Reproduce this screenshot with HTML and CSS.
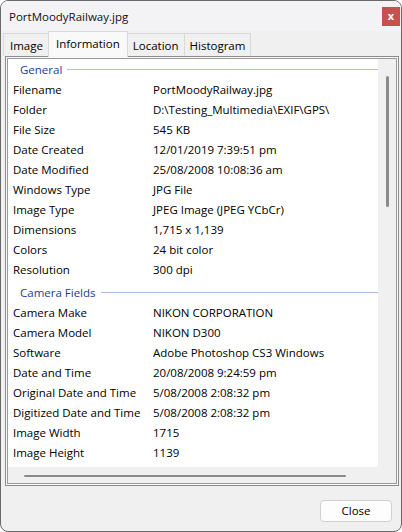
FILE: index.html
```html
<!DOCTYPE html>
<html>
<head>
<meta charset="utf-8">
<link rel="stylesheet" href="styles.css">
</head>
<body>
<div class="window">
  <div class="titlebar">
    <span class="title">PortMoodyRailway.jpg</span>
    <span class="close-x">x</span>
  </div>
  <div class="tabs">
    <div class="tab first">Image</div>
    <div class="tab active">Information</div>
    <div class="tab">Location</div>
    <div class="tab">Histogram</div>
  </div>
  <div class="panel">
    <div class="listview">
      <div class="content">
        <div class="group"><span>General</span><i class="rule"></i></div>
        <div class="row"><span class="k">Filename</span><span class="v">PortMoodyRailway.jpg</span></div>
        <div class="row"><span class="k">Folder</span><span class="v">D:\Testing_Multimedia\EXIF\GPS\</span></div>
        <div class="row"><span class="k">File Size</span><span class="v">545 KB</span></div>
        <div class="row"><span class="k">Date Created</span><span class="v">12/01/2019 7:39:51 pm</span></div>
        <div class="row"><span class="k">Date Modified</span><span class="v">25/08/2008 10:08:36 am</span></div>
        <div class="row"><span class="k">Windows Type</span><span class="v">JPG File</span></div>
        <div class="row"><span class="k">Image Type</span><span class="v">JPEG Image (JPEG YCbCr)</span></div>
        <div class="row"><span class="k">Dimensions</span><span class="v">1,715 x 1,139</span></div>
        <div class="row"><span class="k">Colors</span><span class="v">24 bit color</span></div>
        <div class="row"><span class="k">Resolution</span><span class="v">300 dpi</span></div>
        <div class="group second"><span>Camera Fields</span><i class="rule"></i></div>
        <div class="row"><span class="k">Camera Make</span><span class="v">NIKON CORPORATION</span></div>
        <div class="row"><span class="k">Camera Model</span><span class="v">NIKON D300</span></div>
        <div class="row"><span class="k">Software</span><span class="v">Adobe Photoshop CS3 Windows</span></div>
        <div class="row"><span class="k">Date and Time</span><span class="v">20/08/2008 9:24:59 pm</span></div>
        <div class="row"><span class="k">Original Date and Time</span><span class="v">5/08/2008 2:08:32 pm</span></div>
        <div class="row"><span class="k">Digitized Date and Time</span><span class="v">5/08/2008 2:08:32 pm</span></div>
        <div class="row"><span class="k">Image Width</span><span class="v">1715</span></div>
        <div class="row"><span class="k">Image Height</span><span class="v">1139</span></div>
      </div>
      <div class="vscroll"><div class="vthumb"></div></div>
      <div class="hscroll"><div class="hthumb"></div></div>
    </div>
  </div>
  <div class="footer">
    <button class="btn">Close</button>
  </div>
</div>
</body>
</html>
```
FILE: styles.css
```css
* { box-sizing: border-box; }
html, body { margin: 0; padding: 0; background: #ffffff; }
body {
  font-family: "Open Sans", "Noto Sans", "Liberation Sans", sans-serif;
  font-size: 11.5px;
  color: #000;
}
.window {
  width: 402px;
  height: 532px;
  border: 1px solid #6a6a6a;
  border-radius: 8px;
  background: #f0f0f0;
  overflow: hidden;
  display: flex;
  flex-direction: column;
}
.titlebar {
  height: 30px;
  flex: none;
  background: #f3f3f6;
  display: flex;
  align-items: center;
  justify-content: space-between;
  padding: 0 1px 0 8px;
}
.title {
  font-size: 11.5px;
  color: #111;
}
.close-x {
  width: 18px;
  height: 19px;
  background: #c75050;
  color: #fff;
  font-weight: bold;
  font-size: 11px;
  display: flex;
  align-items: center;
  justify-content: center;
  line-height: 1;
  padding-bottom: 2px;
}
.tabs {
  height: 25px;
  flex: none;
  display: flex;
  align-items: flex-end;
  padding-left: 2px;
  position: relative;
  z-index: 2;
}
.tab {
  height: 23px;
  border: 1px solid #d9d9d9;
  border-bottom: none;
  background: #f0f0f0;
  padding: 0 5px;
  display: flex;
  align-items: center;
  margin-right: -1px;
  color: #000;
}
.tab.first { padding: 0 7px 0 6px; }
.tab.active {
  height: 26px;
  margin: 0 -1px -1px -2px;
  background: #f9f9f9;
  padding: 0 7px 3px;
  position: relative;
  z-index: 3;
}
.panel {
  flex: none;
  margin: 0 2px 0 4px;
  border: 1px solid #8c8c8c;
  padding: 1px;
  background: #f9f9f9;
  position: relative;
  z-index: 1;
}
.listview {
  border: 1px solid #9a9a9a;
  background: #f0f0f0;
  display: grid;
  grid-template-columns: 370px 17px;
  grid-template-rows: 408px 16px;
}
.content {
  background: #fff;
  border-bottom-right-radius: 4px;
  overflow: hidden;
}
.group {
  height: 21px;
  display: flex;
  align-items: center;
  padding: 0 0 1px 12px;
  color: #1e3b96;
}
.group.second { margin-top: 2px; }
.group .rule {
  flex: 1;
  height: 1px;
  background: #a9bfe2;
  margin-left: 5px;
}
.row {
  height: 20px;
  display: flex;
  align-items: center;
  padding: 0 0 1px 5px;
  white-space: nowrap;
}
.row .k { width: 140px; flex: none; }
.row .v { flex: none; }
.vscroll { grid-row: 1 / 3; grid-column: 2; padding: 17px 0 0 8px; }
.vthumb { width: 3px; height: 131px; background: #8a8a8a; border-radius: 1.5px; }
.hscroll { grid-row: 2; grid-column: 1; padding: 8px 0 0 16px; }
.hthumb { width: 322px; height: 2px; background: #8a8a8a; border-radius: 1px; }
.footer {
  flex: 1;
  display: flex;
  justify-content: flex-end;
  align-items: flex-start;
  padding: 14px 9px 0 0;
}
.btn {
  width: 72px;
  height: 22px;
  border: 1px solid #d0d0d0;
  border-radius: 4px;
  background: #fdfdfd;
  font-family: inherit;
  font-size: 11.5px;
  color: #000;
  padding: 0 0 1px;
}
```
